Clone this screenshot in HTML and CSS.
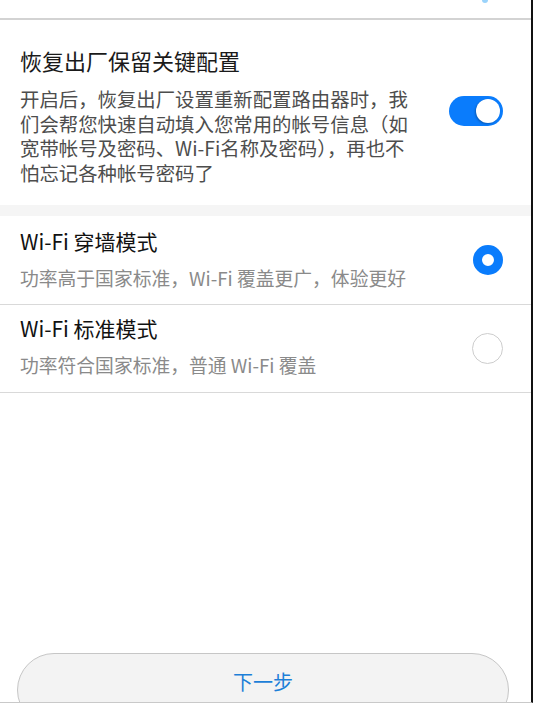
FILE: index.html
```html
<!DOCTYPE html>
<html lang="zh-CN">
<head>
    <meta charset="UTF-8">
    <meta name="viewport" content="width=device-width, initial-scale=1.0">
    <link rel="stylesheet" href="styles.css">
    <title>Wi-Fi 设置</title>
</head>
<body>
    <div class="screen">
        <div class="top-bar">
            <span class="top-dot"></span>
        </div>

        <!-- 恢复出厂 -->
        <section class="setting">
            <h2 class="setting-title">恢复出厂保留关键配置</h2>
            <div class="setting-row">
                <p class="setting-desc">开启后，恢复出厂设置重新配置路由器时，我<br>们会帮您快速自动填入您常用的帐号信息（如<br>宽带帐号及密码、Wi-Fi名称及密码），再也不<br>怕忘记各种帐号密码了</p>
                <span class="switch on"><span class="knob"></span></span>
            </div>
        </section>

        <div class="gap-band"></div>

        <!-- 模式选择 -->
        <ul class="mode-list">
            <li class="mode-item">
                <div class="mode-text">
                    <div class="mode-name">Wi-Fi 穿墙模式</div>
                    <div class="mode-info">功率高于国家标准，Wi-Fi 覆盖更广，体验更好</div>
                </div>
                <span class="radio checked"></span>
            </li>
            <li class="mode-item">
                <div class="mode-text">
                    <div class="mode-name">Wi-Fi 标准模式</div>
                    <div class="mode-info">功率符合国家标准，普通 Wi-Fi 覆盖</div>
                </div>
                <span class="radio"></span>
            </li>
        </ul>

        <div class="spacer"></div>

        <div class="footer">
            <button class="next-button">下一步</button>
        </div>
    </div>
</body>
</html>
```

FILE: styles.css
```css
/* Reset */
* {
    margin: 0;
    padding: 0;
    box-sizing: border-box;
    font-family: "Noto Sans CJK SC", "Noto Sans", sans-serif;
}

body {
    background: #fff;
    color: #1a1a1a;
}

.screen {
    width: 533px;
    height: 703px;
    border-right: 2px solid #111;
    border-bottom: 1px solid #c9c9c9;
    display: flex;
    flex-direction: column;
    overflow: hidden;
    background: #fff;
}

/* Top */
.top-bar {
    height: 20px;
    flex-shrink: 0;
    border-bottom: 2px solid #d3d3d3;
    display: flex;
    justify-content: flex-end;
    padding-right: 43px;
}

.top-dot {
    width: 6px;
    height: 3px;
    border-radius: 0 0 3px 3px;
    background: #9ad3fb;
}

/* Setting block */
.setting {
    padding: 25px 28px 20px 20px;
    flex-shrink: 0;
}

.setting-title {
    font-size: 22px;
    font-weight: 400;
    line-height: 30px;
    color: #1a1a1a;
}

.setting-row {
    display: flex;
    justify-content: space-between;
    align-items: flex-start;
    margin-top: 12px;
}

.setting-desc {
    font-size: 19.4px;
    line-height: 24.5px;
    color: #4d4d4d;
    white-space: nowrap;
}

.switch {
    width: 54px;
    height: 30px;
    border-radius: 15px;
    background: #0a7cfc;
    margin-top: 9px;
    display: flex;
    align-items: center;
    justify-content: flex-end;
    padding-right: 3px;
    flex-shrink: 0;
}

.knob {
    width: 24px;
    height: 24px;
    border-radius: 50%;
    background: #fff;
    box-shadow: -1px 1px 2px rgba(0, 0, 0, 0.25);
}

.gap-band {
    height: 11px;
    background: #f5f5f5;
    flex-shrink: 0;
}

/* Mode list */
.mode-list {
    list-style: none;
    flex-shrink: 0;
}

.mode-item {
    height: 89px;
    border-bottom: 1px solid #d9d9d9;
    padding: 0 28px 0 20px;
    display: flex;
    justify-content: space-between;
    align-items: center;
}

.mode-item + .mode-item {
    height: 88px;
}

.mode-text {
    align-self: flex-start;
    padding-top: 11px;
}

.mode-item + .mode-item .mode-text {
    padding-top: 9px;
}

.mode-name {
    font-size: 21px;
    line-height: 28px;
    color: #111;
}

.mode-info {
    font-size: 18.8px;
    line-height: 26px;
    margin-top: 10px;
    color: #8a8a8a;
}

.radio {
    width: 31px;
    height: 31px;
    border-radius: 50%;
    border: 1.5px solid #cdcdcd;
    flex-shrink: 0;
}

.radio.checked {
    width: 30px;
    height: 30px;
    border: 9px solid #0a7cfc;
}

.spacer {
    flex: 1;
}

/* Footer button */
.footer {
    height: 49px;
    flex-shrink: 0;
    padding: 0 22px 0 17px;
}

.next-button {
    width: 100%;
    height: 74px;
    border-radius: 37px;
    border: 1px solid #c6c6c6;
    background: #f3f3f3;
    color: #1c7fd8;
    font-size: 20px;
    line-height: 28px;
    padding-top: 14px;
    display: flex;
    justify-content: center;
    align-items: flex-start;
}
```
